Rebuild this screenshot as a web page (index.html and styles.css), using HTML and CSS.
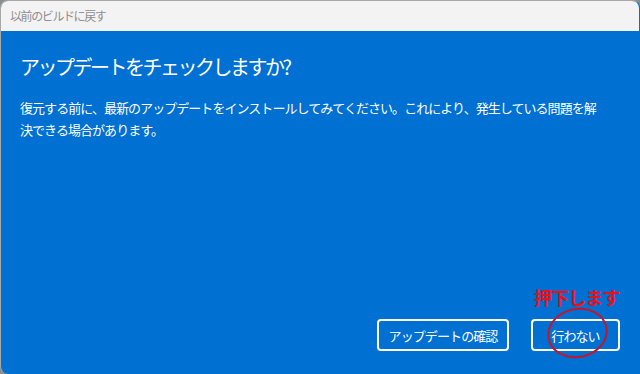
FILE: index.html
```html
<!DOCTYPE html>
<html lang="ja">

<head>
  <meta charset="UTF-8" />
  <title>以前のビルドに戻す</title>
  <link rel="stylesheet" href="styles.css">
</head>

<body>

  <div class="window">
    <div class="titlebar">以前のビルドに戻す</div>

    <div class="content">
      <h1>アップデートをチェックしますか?</h1>
      <p class="desc">
        復元する前に、最新のアップデートをインストールしてみてください。これにより、発生している問題を解<br>決できる場合があります。
      </p>

      <div class="actions">
        <button class="btn btn-check">アップデートの確認</button>
        <div class="mark">
          <span class="note">押下します</span>
          <button class="btn btn-no">行わない</button>
          <span class="circle"></span>
        </div>
      </div>
    </div>
  </div>

</body>

</html>
```

FILE: styles.css
```css
/* Windows 11 style dialog */
html,
body {
  margin: 0;
  height: 100%;
  background: #8c8c8c;
}

body {
  font-family: "Noto Sans CJK JP", "Noto Sans", sans-serif;
}

.window {
  box-sizing: border-box;
  height: 374px;
  border: 1px solid #a8a8a8;
  border-right-color: #0070d2;
  border-bottom: none;
  border-radius: 8px 8px 0 8px;
  overflow: hidden;
  display: flex;
  flex-direction: column;
  background: #0070d2;
}

.titlebar {
  height: 30px;
  flex: none;
  background: #f3f3f3;
  color: #8f8f8f;
  font-size: 12px;
  line-height: 30px;
  padding-left: 9px;
  letter-spacing: -1.4px;
}

.content {
  flex: 1;
  display: flex;
  flex-direction: column;
  padding: 0 19px 23px 19px;
  color: #fff;
}

h1 {
  margin: 22px 0 0 0;
  font-size: 20px;
  font-weight: 400;
  letter-spacing: -2.5px;
  line-height: 28px;
}

.desc {
  margin: 16px 0 0 0;
  font-size: 13px;
  line-height: 22px;
  letter-spacing: -0.95px;
}

.actions {
  margin-top: auto;
  display: flex;
  justify-content: flex-end;
  align-items: flex-end;
  gap: 22px;
}

.btn {
  height: 32px;
  padding: 0;
  border: 2px solid #fff;
  border-radius: 4px;
  background: transparent;
  color: #fff;
  font-family: "Noto Sans CJK JP", "Noto Sans", sans-serif;
  font-size: 13px;
  letter-spacing: -0.9px;
}

.btn-check {
  width: 132px;
}

.btn-no {
  width: 89px;
}

.mark {
  position: relative;
}

.note {
  position: absolute;
  left: 3px;
  top: -35px;
  color: #e8101a;
  font-size: 18px;
  font-weight: 700;
  letter-spacing: -0.9px;
  white-space: nowrap;
}

.circle {
  position: absolute;
  left: 16px;
  top: -11px;
  width: 57px;
  height: 46px;
  border: 2px solid #c4162a;
  border-radius: 50%;
  transform: rotate(-12deg);
}
```
